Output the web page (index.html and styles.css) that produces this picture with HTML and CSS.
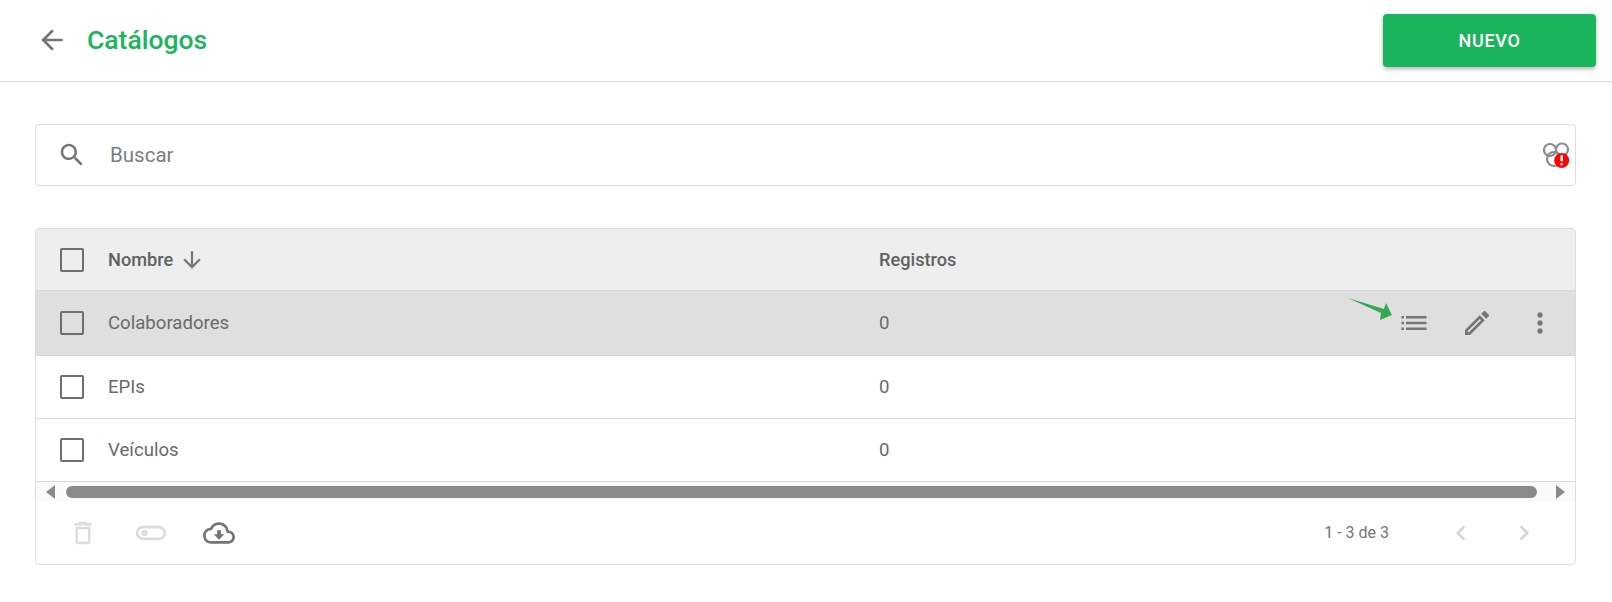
FILE: index.html
```html
<!DOCTYPE html>
<html lang="es">
<head>
    <meta charset="UTF-8">
    <title>Catálogos</title>
    <link rel="stylesheet" href="styles.css">
</head>
<body>
    <header class="top-bar">
        <div class="top-title">
            <svg class="back-icon" viewBox="0 0 24 24"><path d="M20 11H7.83l5.59-5.59L12 4l-8 8 8 8 1.41-1.41L7.83 13H20v-2z"/></svg>
            <h1>Catálogos</h1>
        </div>
        <button class="new-btn">NUEVO</button>
    </header>

    <main class="content">
        <div class="search-box">
            <svg class="search-icon" viewBox="0 0 24 24"><path d="M15.5 14h-.79l-.28-.27C15.41 12.59 16 11.11 16 9.5 16 5.91 13.09 3 9.5 3S3 5.91 3 9.5 5.91 16 9.5 16c1.61 0 3.09-.59 4.23-1.57l.27.28v.79l5 4.99L20.49 19l-4.99-5zm-6 0C7.01 14 5 11.99 5 9.5S7.01 5 9.5 5 14 7.01 14 9.5 11.99 14 9.5 14z"/></svg>
            <span class="search-text">Buscar</span>
            <span class="status-icon">
                <svg viewBox="0 0 28 26">
                    <circle cx="7" cy="8" r="6" class="ring"/>
                    <circle cx="19" cy="7.500" r="6" class="ring"/>
                    <circle cx="11" cy="17" r="7" class="ring"/>
                    <circle cx="18.700" cy="18.500" r="7.500" class="alert"/>
                    <rect x="17.500" y="13" width="2.400" height="6.500" rx="1" class="mark"/>
                    <rect x="17.500" y="21" width="2.400" height="2.400" rx="1" class="mark"/>
                </svg>
            </span>
        </div>

        <section class="table-card">
            <div class="row head-row">
                <span class="check"></span>
                <span class="cell sort-cell">Nombre
                    <svg class="sort-icon" viewBox="0 0 24 24"><path d="M20 12l-1.41-1.41L13 16.17V4h-2v12.17l-5.58-5.59L4 12l8 8 8-8z"/></svg>
                </span>
                <span class="cell">Registros</span>
            </div>
            <div class="row active-row">
                <span class="check"></span>
                <span class="cell">Colaboradores</span>
                <span class="cell">0</span>
                <div class="row-actions">
                    <svg class="pointer" viewBox="0 0 46 24"><path d="M0 0 L36 11 L38 5 L44 17 L32 22 L33 15 Z"/></svg>
                    <svg class="action" viewBox="0 0 32 32"><path d="M3.500 9h2.500v2.500H3.500zM8 9h20.500v2.500H8zM3.500 14.800h2.500v2.500H3.500zM8 14.800h20.500v2.500H8zM3.500 20.500h2.500V23H3.500zM8 20.500h20.500V23H8z"/></svg>
                    <svg class="action" viewBox="0 0 24 24"><path d="M3 17.250V21h3.750L17.810 9.940l-3.750-3.750L3 17.250zM5.920 19H5v-.92l9.060-9.060.92.92L5.920 19zM20.710 7.040c.39-.39.39-1.020 0-1.410l-2.340-2.340c-.39-.39-1.020-.39-1.410 0l-1.830 1.830 3.750 3.750 1.830-1.830z"/></svg>
                    <svg class="action" viewBox="0 0 24 24"><path d="M12 8c1.100 0 2-.9 2-2s-.9-2-2-2-2 .9-2 2 .9 2 2 2zm0 2c-1.100 0-2 .9-2 2s.9 2 2 2 2-.9 2-2-.9-2-2-2zm0 6c-1.100 0-2 .9-2 2s.9 2 2 2 2-.9 2-2-.9-2-2-2z"/></svg>
                </div>
            </div>
            <div class="row">
                <span class="check"></span>
                <span class="cell">EPIs</span>
                <span class="cell">0</span>
            </div>
            <div class="row">
                <span class="check"></span>
                <span class="cell">Veículos</span>
                <span class="cell">0</span>
            </div>

            <div class="scroll-bar">
                <span class="arrow-left"></span>
                <span class="thumb"></span>
                <span class="arrow-right"></span>
            </div>

            <div class="table-foot">
                <div class="foot-tools">
                    <svg class="tool faded" viewBox="0 0 24 24"><path d="M6 19c0 1.100.9 2 2 2h8c1.100 0 2-.9 2-2V7H6v12zM8 9h8v10H8V9zm7.500-5l-1-1h-5l-1 1H5v2h14V4h-3.500z"/></svg>
                    <svg class="tool faded toggle" viewBox="0 0 30 24"><rect x="2" y="6.500" width="26" height="11" rx="5.500" class="toggle-body"/><circle cx="9" cy="12" r="3"/></svg>
                    <svg class="tool cloud" viewBox="0 0 24 24"><path d="M19.350 10.040C18.670 6.590 15.640 4 12 4 9.110 4 6.600 5.640 5.350 8.040 2.340 8.360 0 10.910 0 14c0 3.310 2.690 6 6 6h13c2.760 0 5-2.240 5-5 0-2.640-2.050-4.780-4.650-4.960zM19 18H6c-2.210 0-4-1.790-4-4 0-2.050 1.530-3.760 3.560-3.970l1.070-.11.5-.95C8.080 7.140 9.940 6 12 6c2.620 0 4.880 1.860 5.390 4.430l.3 1.500 1.530.11c1.560.1 2.780 1.410 2.780 2.960 0 1.650-1.350 3-3 3zm-5.550-8h-2.900v3H8l4 4 4-4h-2.550z"/></svg>
                </div>
                <div class="pager">
                    <span class="pager-text">1 - 3 de 3</span>
                    <svg class="pager-icon" viewBox="0 0 24 24"><path d="M15.410 7.410L14 6l-6 6 6 6 1.410-1.410L10.830 12z"/></svg>
                    <svg class="pager-icon" viewBox="0 0 24 24"><path d="M10 6L8.590 7.410 13.170 12l-4.580 4.590L10 18l6-6z"/></svg>
                </div>
            </div>
        </section>
    </main>
</body>
</html>
```

FILE: styles.css
```css
* {
    box-sizing: border-box;
}
body {
    margin: 0;
    background-color: #fff;
    font-family: Roboto, "Liberation Sans", sans-serif;
    color: #666;
}
.top-bar {
    display: flex;
    justify-content: space-between;
    align-items: center;
    height: 82px;
    padding: 0 16px 0 36px;
    border-bottom: 1px solid #dcdcdc;
}
.top-title {
    display: flex;
    align-items: center;
    gap: 19px;
    margin-bottom: 1px;
}
.back-icon {
    width: 32px;
    height: 32px;
    fill: #757575;
}
.top-title h1 {
    margin: 0 0 2px;
    font-size: 26.500px;
    font-weight: 500;
    color: #1ab55c;
}
.new-btn {
    width: 213px;
    height: 53px;
    border: none;
    border-radius: 4px;
    background-color: #19b45b;
    color: white;
    font-family: inherit;
    font-size: 18px;
    font-weight: 500;
    letter-spacing: 0.7px;
    box-shadow: 0 2px 4px rgba(0, 0, 0, 0.3);
}
.content {
    padding: 42px 36px 0 35px;
}
.search-box {
    display: flex;
    align-items: center;
    height: 62px;
    padding: 0 3px 0 21px;
    border: 1px solid #dcdcdc;
    border-radius: 4px;
}
.search-icon {
    width: 30px;
    height: 30px;
    fill: #757575;
}
.search-text {
    flex: 1;
    margin-left: 23px;
    font-size: 20.500px;
    color: #7c7c7c;
}
.status-icon {
    display: flex;
    margin-right: 1px;
}
.status-icon svg {
    width: 28px;
    height: 26px;
}
.ring {
    fill: none;
    stroke: #8c8c8c;
    stroke-width: 2.200;
}
.alert {
    fill: #f00;
}
.mark {
    fill: #fff;
}
.table-card {
    margin-top: 42px;
    border: 1px solid #dcdcdc;
    border-radius: 4px;
    overflow: hidden;
}
.row {
    position: relative;
    display: grid;
    grid-template-columns: 72px 771px 1fr;
    align-items: center;
    height: 63px;
    border-bottom: 1px solid #d8d8d8;
    font-size: 18.600px;
    color: #6a6a6a;
}
.head-row {
    height: 62px;
    background-color: #eee;
    font-size: 18.200px;
    font-weight: 500;
    color: #616161;
}
.active-row {
    height: 65px;
    background-color: #dfdfdf;
}
.check {
    width: 24px;
    height: 24px;
    margin-left: 24px;
    border: 2px solid #6e6e6e;
    border-radius: 2px;
}
.sort-cell {
    display: flex;
    align-items: center;
    gap: 6px;
}
.sort-icon {
    width: 26px;
    height: 26px;
    fill: #757575;
}
.row-actions {
    position: absolute;
    top: 0;
    right: 19px;
    bottom: 0;
    display: flex;
    align-items: center;
    gap: 31px;
}
.action {
    width: 32px;
    height: 32px;
    fill: #757575;
}
.pointer {
    position: absolute;
    top: 7px;
    left: -50px;
    width: 46px;
    height: 24px;
    fill: #34a853;
}
.scroll-bar {
    display: flex;
    align-items: center;
    height: 19px;
    padding: 0 10px;
    background-color: #fafafa;
}
.arrow-left {
    border-top: 7px solid transparent;
    border-bottom: 7px solid transparent;
    border-right: 9px solid #8a8a8a;
}
.thumb {
    flex: 1;
    height: 12px;
    margin: 0 19px 0 11px;
    border-radius: 6px;
    background-color: #8a8a8a;
}
.arrow-right {
    border-top: 7px solid transparent;
    border-bottom: 7px solid transparent;
    border-left: 9px solid #8a8a8a;
}
.table-foot {
    display: flex;
    justify-content: space-between;
    align-items: center;
    height: 63px;
    padding: 0 36px 0 32px;
}
.foot-tools {
    display: flex;
    align-items: center;
    gap: 36.500px;
}
.tool {
    width: 30px;
    height: 30px;
    fill: #757575;
}
.tool.cloud {
    width: 32px;
    height: 32px;
}
.tool.faded {
    fill: #dcdcdc;
}
.tool.toggle {
    width: 32px;
}
.toggle-body {
    fill: none;
    stroke: #dcdcdc;
    stroke-width: 2.500;
}
.pager {
    display: flex;
    align-items: center;
    gap: 33.500px;
}
.pager-text {
    margin-right: 23px;
    font-size: 16px;
    color: #757575;
}
.pager-icon {
    width: 30px;
    height: 30px;
    fill: #d4d4d4;
}
```
